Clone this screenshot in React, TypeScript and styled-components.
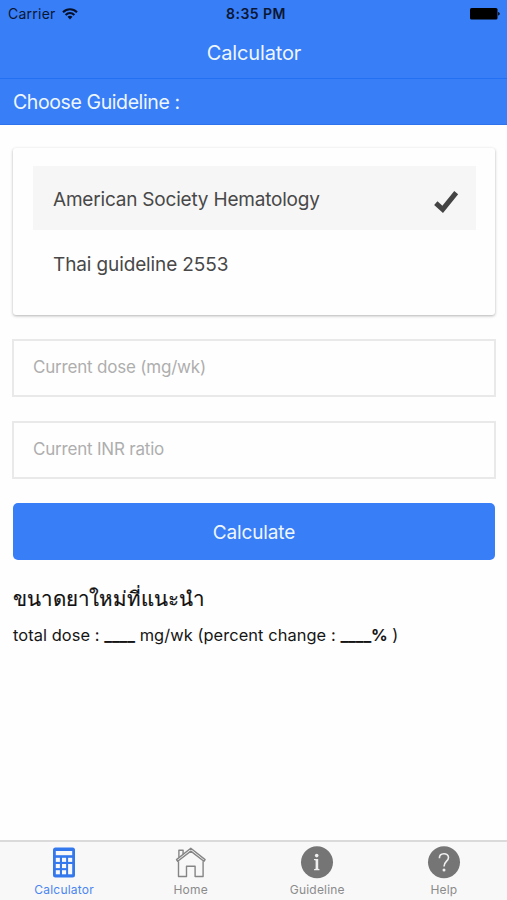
import React from "react";
import styled, { createGlobalStyle } from "styled-components";

const Global = createGlobalStyle`
  * { box-sizing: border-box; }
  html, body { margin: 0; padding: 0; }
  body { background: #fff; font-family: Inter, "Noto Sans", "Liberation Sans", sans-serif; }
  button, input { font-family: inherit; }
`;

const Screen = styled.div`
  width: 507px;
  height: 900px;
  display: flex;
  flex-direction: column;
  overflow: hidden;
  background: #fefefe;
`;

const StatusBar = styled.div`
  height: 27px;
  flex: none;
  display: grid;
  grid-template-columns: 1fr auto 1fr;
  align-items: center;
  padding: 0 7px 0 8px;
  background: #387ef7;
  color: #0b1633;
  font-size: 14px;
`;

const Carrier = styled.div`
  display: flex;
  align-items: center;
  gap: 6px;
  letter-spacing: 0.25px;
`;

const Clock = styled.div`
  font-weight: 600;
  padding-left: 4px;
  letter-spacing: 0.45px;
`;

const BatterySlot = styled.div`
  display: flex;
  justify-content: flex-end;
`;

const NavBar = styled.header`
  height: 52px;
  flex: none;
  display: flex;
  align-items: center;
  justify-content: center;
  padding-left: 1px;
  background: #387ef7;
  border-bottom: 1px solid #2470f4;
  color: #eef6ff;
  font-size: 20px;
  letter-spacing: -0.15px;
`;

const SubHeader = styled.div`
  height: 46px;
  flex: none;
  padding: 0 13px;
  line-height: 46px;
  background: #387ef7;
  border-bottom: 1px solid #2f73ea;
  color: #eef6ff;
  font-size: 19.5px;
  letter-spacing: -0.4px;
`;

const Content = styled.main`
  flex: 1;
  padding: 23px 12px 0;
`;

const Card = styled.section`
  height: 167px;
  margin: 0 0 24px 1px;
  width: 482px;
  padding: 18px 19px 0 20px;
  border-radius: 3px;
  background: #fefefe;
  box-shadow: 0 1px 3px rgba(0, 0, 0, 0.3);
`;

const Option = styled.div<{ $selected?: boolean }>`
  height: 64px;
  display: flex;
  align-items: center;
  justify-content: space-between;
  padding: ${(p) => (p.$selected ? "3px 17px 0 20px" : "4px 17px 0 20px")};
  background: ${(p) => (p.$selected ? "#f6f6f6" : "transparent")};
  color: #484848;
  font-size: 19px;
  letter-spacing: ${(p) => (p.$selected ? "-0.2px" : "-0.12px")};
`;

const Field = styled.input`
  display: block;
  width: 484px;
  height: 58px;
  margin-bottom: 24px;
  padding: 0 19px 3px;
  border: 2px solid #e9e9e9;
  border-radius: 0;
  background: #fefefe;
  font-size: 17px;
  letter-spacing: -0.2px;
  &::placeholder { color: #aeaeae; opacity: 1; }
`;

const Submit = styled.button`
  display: block;
  width: 482px;
  height: 57px;
  margin-left: 1px;
  padding: 2px 0 0;
  border: 0;
  border-radius: 5px;
  background: #387ef7;
  color: #eef6ff;
  font-size: 19px;
  letter-spacing: -0.15px;
`;

const ResultTitle = styled.h2`
  margin: 22px 1px 0;
  height: 34px;
  line-height: 34px;
  font-size: 20.5px;
  font-weight: 500;
  letter-spacing: -0.1px;
  color: #111;
  -webkit-text-stroke: 0.2px #111;
`;

const ResultLine = styled.p`
  margin: 7px 1px 0;
  line-height: 24px;
  font-size: 16.4px;
  letter-spacing: 0.08px;
  color: #151515;
  white-space: nowrap;
`;

const Value = styled.b`
  letter-spacing: -0.15px;
`;

const TabBar = styled.nav`
  height: 60px;
  flex: none;
  display: grid;
  grid-template-columns: repeat(4, 126.6px);
  padding-left: 0.8px;
  background: #f8f8f8;
  border-top: 2px solid #dadada;
`;

const Tab = styled.div<{ $active?: boolean }>`
  display: flex;
  flex-direction: column;
  align-items: center;
  padding-top: 4px;
  color: ${(p) => (p.$active ? "#4a86f2" : "#8b8b8b")};
  font-size: 12px;
  letter-spacing: 0.2px;
`;

const TabIcon = styled.svg`
  width: 34px;
  height: 34px;
  margin-bottom: 2px;
`;

const CalculatorIcon = () => (
  <TabIcon viewBox="0 0 34 34">
    <rect x="6" y="1.5" width="22" height="30" rx="2.5" fill="#3478ee" />
    <g fill="#f8f8f8">
      <rect x="8.8" y="5" width="16.4" height="4.2" />
      <rect x="8.8" y="11.8" width="4.1" height="4.1" />
      <rect x="15" y="11.8" width="4.1" height="4.1" />
      <rect x="21.1" y="11.8" width="4.1" height="4.1" />
      <rect x="8.8" y="18" width="4.1" height="4.1" />
      <rect x="15" y="18" width="4.1" height="4.1" />
      <rect x="8.8" y="24.2" width="4.1" height="4.1" />
      <rect x="15" y="24.2" width="4.1" height="4.1" />
      <rect x="21.1" y="18" width="4.1" height="10.3" />
    </g>
  </TabIcon>
);

const HomeIcon = () => (
  <TabIcon viewBox="0 0 34 34" fill="none" stroke="#858585" strokeWidth="1.4" strokeLinejoin="round">
    <path d="M4.5 15.3V30.5H12.5V20.2H21.1V30.5H29.1V15.3" />
    <path d="M2.5 13.6L16.8 2.3L31.1 13.6L29.9 15.3L16.8 5.1L3.7 15.3Z" />
    <path d="M4.9 11.4V4.3H9.1V8.2" />
  </TabIcon>
);

const InfoIcon = () => (
  <TabIcon viewBox="0 0 34 34">
    <circle cx="17" cy="16.2" r="16" fill="#757575" />
    <g fill="#efefef">
      <circle cx="16.7" cy="9.6" r="1.8" />
      <path d="M14 13H18.2V22.7L19.5 23.3V24.2H14V23.3L15.6 22.7V14.4L14 14Z" />
    </g>
  </TabIcon>
);

const HelpIcon = () => (
  <TabIcon viewBox="0 0 34 34">
    <circle cx="17" cy="16.2" r="16" fill="#757575" />
    <path d="M12.4 12.2C12.3 6.4 21.5 6.5 21.5 11.6C21.5 15.3 17 15.2 17 20.5" fill="none" stroke="#efefef" strokeWidth="1.6" />
    <circle cx="17" cy="23.9" r="1.5" fill="#efefef" />
  </TabIcon>
);

const WifiIcon = () => (
  <svg width="16" height="12" viewBox="0 0 16 12" fill="none" stroke="#07102a" strokeWidth="2">
    <path d="M1 4.2C5 .2 11 .2 15 4.2" />
    <path d="M3.6 7C6.2 4.4 9.8 4.4 12.4 7" />
    <path d="M5.5 8.7Q8 6.9 10.5 8.7L8 11.4Z" fill="#07102a" stroke="none" />
  </svg>
);

const BatteryIcon = () => (
  <svg width="30" height="12" viewBox="0 0 30 12" fill="#000">
    <rect width="27.5" height="11.5" rx="1.5" />
    <path d="M28.2 4C30.2 4.5 30.2 7 28.2 7.6Z" />
  </svg>
);

const CheckSvg = styled.svg`
  margin-top: 5px;
`;

const CheckIcon = () => (
  <CheckSvg width="26" height="24" viewBox="0 0 26 24">
    <path d="M2.8 13.2L9.7 19.4L23.2 2.6" fill="none" stroke="#444" strokeWidth="5" />
  </CheckSvg>
);

export default function App() {
  return (
    <Screen>
      <Global />
      <StatusBar>
        <Carrier>Carrier <WifiIcon /></Carrier>
        <Clock>8:35 PM</Clock>
        <BatterySlot><BatteryIcon /></BatterySlot>
      </StatusBar>
      <NavBar>Calculator</NavBar>
      <SubHeader>Choose Guideline :</SubHeader>
      <Content>
        <Card>
          <Option $selected>American Society Hematology<CheckIcon /></Option>
          <Option>Thai guideline 2553</Option>
        </Card>
        <Field placeholder="Current dose (mg/wk)" />
        <Field placeholder="Current INR ratio" />
        <Submit>Calculate</Submit>
        <ResultTitle>ขนาดยาใหม่ที่แนะนำ</ResultTitle>
        <ResultLine>total dose : <Value>____</Value> mg/wk (percent change : <Value>____%</Value> )</ResultLine>
      </Content>
      <TabBar>
        <Tab $active><CalculatorIcon />Calculator</Tab>
        <Tab><HomeIcon />Home</Tab>
        <Tab><InfoIcon />Guideline</Tab>
        <Tab><HelpIcon />Help</Tab>
      </TabBar>
    </Screen>
  );
}
